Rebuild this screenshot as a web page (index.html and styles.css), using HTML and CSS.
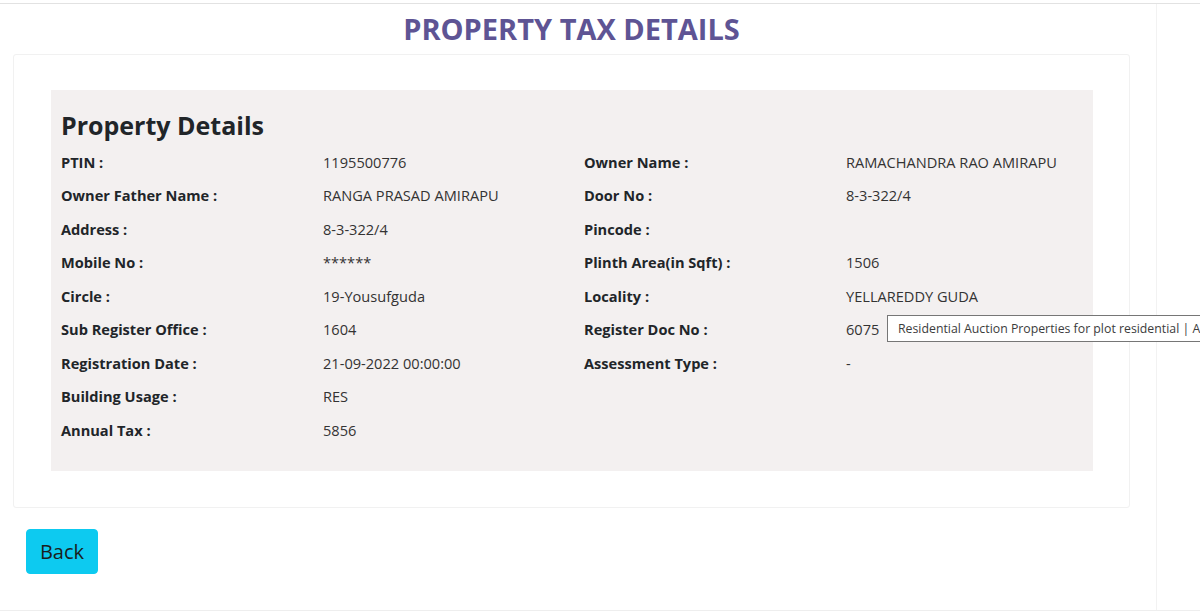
FILE: index.html
```html
<!DOCTYPE html>
<html>
<head>
<meta charset="utf-8">
<link rel="stylesheet" href="styles.css">
</head>
<body>
<div class="frame">
  <div class="page">
    <h1 class="title">PROPERTY TAX DETAILS</h1>
    <div class="card">
      <div class="panel">
        <h2 class="panel-title">Property Details</h2>
        <div class="grid">
          <div class="lbl">PTIN :</div><div class="val">1195500776</div>
          <div class="lbl">Owner Name :</div><div class="val">RAMACHANDRA RAO AMIRAPU</div>
          <div class="lbl">Owner Father Name :</div><div class="val">RANGA PRASAD AMIRAPU</div>
          <div class="lbl">Door No :</div><div class="val">8-3-322/4</div>
          <div class="lbl">Address :</div><div class="val">8-3-322/4</div>
          <div class="lbl">Pincode :</div><div class="val"></div>
          <div class="lbl">Mobile No :</div><div class="val">******</div>
          <div class="lbl">Plinth Area(in Sqft) :</div><div class="val">1506</div>
          <div class="lbl">Circle :</div><div class="val">19-Yousufguda</div>
          <div class="lbl">Locality :</div><div class="val">YELLAREDDY GUDA</div>
          <div class="lbl">Sub Register Office :</div><div class="val">1604</div>
          <div class="lbl">Register Doc No :</div><div class="val tip-host">6075<span class="tooltip">Residential Auction Properties for plot residential | Auction</span></div>
          <div class="lbl">Registration Date :</div><div class="val">21-09-2022 00:00:00</div>
          <div class="lbl">Assessment Type :</div><div class="val">-</div>
          <div class="lbl">Building Usage :</div><div class="val">RES</div>
          <div class="lbl"></div><div class="val"></div>
          <div class="lbl">Annual Tax :</div><div class="val">5856</div>
          <div class="lbl"></div><div class="val"></div>
        </div>
      </div>
    </div>
    <button class="back">Back</button>
  </div>
</div>
</body>
</html>
```
FILE: styles.css
```css
* { box-sizing: border-box; }
html, body { margin: 0; padding: 0; background: #fff; overflow: hidden; }
body {
  font-family: "Open Sans", "Noto Sans", sans-serif;
  color: #212529;
  width: 1200px;
  height: 613px;
}
.frame {
  border-top: 1px solid #e2e2e2;
  border-bottom: 1px solid #eeeeee;
  margin-top: 3px;
  height: 608px;
  width: 1200px;
  position: relative;
}
.page {
  width: 1157px;
  height: 100%;
  border-right: 1px solid #f2f2f2;
  padding: 8px 0 0 0;
}
.title {
  margin: 0;
  width: 1143px;
  text-align: center;
  font-size: 29px;
  line-height: 34px;
  font-weight: 700;
  color: #5e5494;
}
.card {
  margin: 8px 0 0 13px;
  width: 1117px;
  border: 1px solid #f1f1f1;
  border-radius: 3px;
  padding: 35px 36px 36px 37px;
}
.panel {
  background: #f3f0f0;
  padding: 20px 10px 24px 10px;
}
.panel-title {
  margin: 0 0 4px 0;
  font-size: 25px;
  line-height: 31px;
  font-weight: 700;
  color: #212529;
}
.grid {
  display: grid;
  grid-template-columns: 262px 261px 262px 1fr;
  grid-auto-rows: 33.5px;
  align-items: center;
  font-size: 14.6px;
}
.lbl { font-weight: 700; color: #212529; }
.val { color: #333; }
.tip-host { position: relative; }
.tooltip {
  position: absolute;
  left: 41px;
  top: -4px;
  white-space: nowrap;
  background: #fff;
  border: 1px solid #767676;
  font-size: 12.3px;
  line-height: 25px;
  padding: 0 10px;
  color: #3c3c3c;
  z-index: 2;
}
.back {
  margin: 21px 0 0 26px;
  width: 72px;
  height: 45px;
  background: #0dcaf0;
  border: 1px solid #0dcaf0;
  border-radius: 4px;
  font-family: "Open Sans", "Noto Sans", sans-serif;
  font-size: 20px;
  color: #1a1d20;
  padding: 0;
}
```
